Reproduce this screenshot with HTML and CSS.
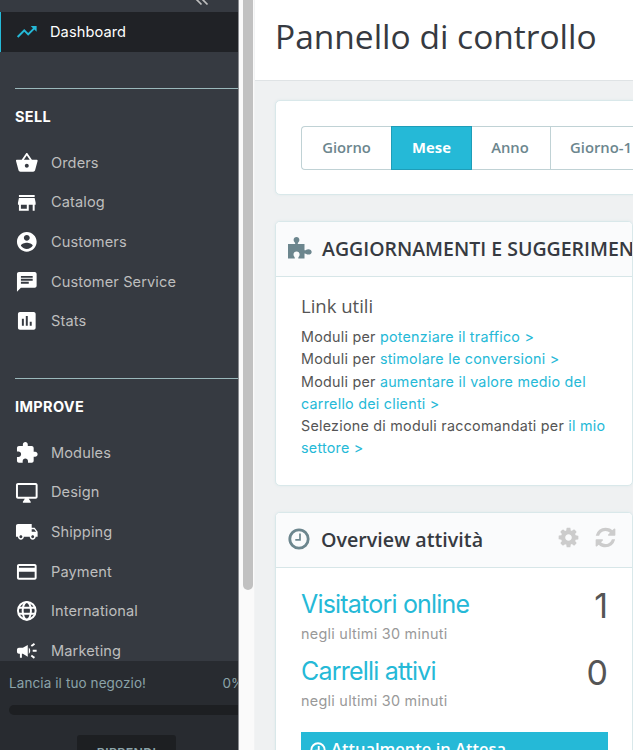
FILE: index.html
```html
<!DOCTYPE html>
<html lang="it">
<head>
<meta charset="utf-8">
<title>Pannello di controllo</title>
<link rel="stylesheet" href="styles.css">
</head>
<body>
<div class="app">
  <nav class="sidebar">
    <div class="collapse"><svg width="14" height="12" viewBox="0 0 14 12"><path d="M6.5 0.5L1.5 5.5l5 5M12.5 0.5l-5 5 5 5"/></svg></div>
    <a class="item active"><svg viewBox="0 0 24 24"><path d="M16 6l2.29 2.29-4.88 4.88-4-4L2 16.59 3.41 18l6-6 4 4 6.3-6.29L22 12V6z"/></svg><span>Dashboard</span></a>
    <section class="group first">
      <h2>SELL</h2>
      <a class="item"><svg viewBox="0 0 24 24"><path d="M17.21 9l-4.38-6.56c-.19-.28-.51-.42-.83-.42-.32 0-.64.14-.83.43L6.79 9H2c-.55 0-1 .45-1 1 0 .09.01.18.04.27l2.54 9.27c.23.84 1 1.46 1.92 1.46h13c.92 0 1.69-.62 1.93-1.46l2.54-9.27L23 10c0-.55-.45-1-1-1h-4.79zM9 9l3-4.4L15 9H9zm3 8c-1.1 0-2-.9-2-2s.9-2 2-2 2 .9 2 2-.9 2-2 2z"/></svg><span>Orders</span></a>
      <a class="item"><svg viewBox="0 0 24 24"><path d="M20 4H4v2h16V4zm1 10v-2l-1-5H4l-1 5v2h1v6h10v-6h4v6h2v-6h1zm-9 4H6v-4h6v4z"/></svg><span>Catalog</span></a>
      <a class="item"><svg viewBox="0 0 24 24"><path d="M12 2C6.48 2 2 6.48 2 12s4.48 10 10 10 10-4.48 10-10S17.52 2 12 2zm0 3c1.66 0 3 1.34 3 3s-1.340 3-3 3-3-1.340-3-3 1.340-3 3-3zm0 14.200c-2.500 0-4.710-1.280-6-3.220.030-1.990 4-3.080 6-3.080 1.990 0 5.970 1.090 6 3.080-1.290 1.940-3.500 3.220-6 3.220z"/></svg><span>Customers</span></a>
      <a class="item"><svg viewBox="0 0 24 24"><path d="M20 2H4c-1.100 0-1.990.9-1.990 2L2 22l4-4h14c1.100 0 2-.9 2-2V4c0-1.100-.9-2-2-2zM6 9h12v2H6V9zm8 5H6v-2h8v2zm4-6H6V6h12v2z"/></svg><span>Customer Service</span></a>
      <a class="item"><svg viewBox="0 0 24 24"><path d="M19 3H5c-1.100 0-2 .9-2 2v14c0 1.100.9 2 2 2h14c1.100 0 2-.9 2-2V5c0-1.100-.9-2-2-2zM9 17H7v-7h2v7zm4 0h-2V7h2v10zm4 0h-2v-4h2v4z"/></svg><span>Stats</span></a>
    </section>
    <section class="group">
      <h2>IMPROVE</h2>
      <a class="item"><svg viewBox="0 0 24 24"><path d="M20.500 11H19V7c0-1.100-.9-2-2-2h-4V3.500C13 2.120 11.880 1 10.500 1S8 2.120 8 3.500V5H4c-1.100 0-1.990.9-1.990 2v3.800H3.500c1.490 0 2.700 1.210 2.700 2.700s-1.210 2.700-2.700 2.700H2V20c0 1.100.9 2 2 2h3.800v-1.500c0-1.490 1.210-2.700 2.700-2.700 1.490 0 2.700 1.210 2.700 2.700V22H17c1.100 0 2-.9 2-2v-4h1.500c1.380 0 2.500-1.120 2.500-2.500S21.880 11 20.500 11z"/></svg><span>Modules</span></a>
      <a class="item"><svg viewBox="0 0 24 24"><path d="M21 2H3c-1.100 0-2 .9-2 2v12c0 1.100.9 2 2 2h7l-2 3v1h8v-1l-2-3h7c1.100 0 2-.9 2-2V4c0-1.100-.9-2-2-2zm0 14H3V4h18v12z"/></svg><span>Design</span></a>
      <a class="item"><svg viewBox="0 0 24 24"><path d="M20 8h-3V4H3c-1.100 0-2 .9-2 2v11h2c0 1.660 1.340 3 3 3s3-1.340 3-3h6c0 1.660 1.340 3 3 3s3-1.340 3-3h2v-5l-3-4zM6 18.500c-.83 0-1.500-.67-1.500-1.500s.67-1.500 1.500-1.500 1.500.67 1.500 1.500-.67 1.500-1.500 1.500zm13.500-9l1.960 2.500H17V9.500h2.500zm-1.500 9c-.83 0-1.500-.67-1.500-1.500s.67-1.500 1.500-1.500 1.500.67 1.500 1.500-.67 1.500-1.500 1.500z"/></svg><span>Shipping</span></a>
      <a class="item"><svg viewBox="0 0 24 24"><path d="M20 4H4c-1.110 0-1.990.89-1.990 2L2 18c0 1.110.89 2 2 2h16c1.110 0 2-.89 2-2V6c0-1.110-.89-2-2-2zm0 14H4v-6h16v6zm0-10H4V6h16v2z"/></svg><span>Payment</span></a>
      <a class="item"><svg viewBox="0 0 24 24"><g fill="none" stroke="currentColor" stroke-width="2"><circle cx="12" cy="12" r="9"/><ellipse cx="12" cy="12" rx="4.200" ry="9"/><path d="M3.500 9h17M3.500 15h17"/></g></svg><span>International</span></a>
      <a class="item"><svg viewBox="0 0 24 24"><path d="M18 11v2h4v-2h-4zm-2 6.610c.96.71 2.210 1.650 3.200 2.390.4-.53.8-1.070 1.200-1.600-.99-.74-2.240-1.680-3.200-2.400-.4.54-.8 1.080-1.200 1.610zM20.400 5.600c-.4-.53-.8-1.070-1.200-1.600-.99.740-2.240 1.680-3.200 2.400.4.530.8 1.070 1.200 1.600.96-.72 2.210-1.650 3.200-2.400zM4 9c-1.100 0-2 .9-2 2v2c0 1.100.9 2 2 2h1v4h2v-4h1l5 3V6L8 9H4zm11.500 3c0-1.330-.58-2.530-1.500-3.350v6.690c.92-.81 1.500-2.010 1.500-3.340z"/></svg><span>Marketing</span></a>
    </section>
    <div class="launch">
      <div class="launch-text"><span>Lancia il tuo negozio!</span><span class="percent">0%</span></div>
      <div class="progress"></div>
      <button class="resume">RIPRENDI</button>
    </div>
  </nav>
  <div class="scrollbar"><div class="thumb"></div></div>
  <main class="main">
    <header class="page-head"><h1>Pannello di controllo</h1></header>
    <div class="content">
      <section class="panel dates">
        <div class="buttons"><button>Giorno</button><button class="on">Mese</button><button>Anno</button><button class="last">Giorno-1</button></div>
      </section>
      <section class="panel tips">
        <div class="panel-head"><svg class="puzzle" width="24" height="22" viewBox="0 0 24 22"><path d="M0 7H7.200C7.500 5.400 5.600 5 5.600 3 5.600 1.200 6.900 0 8.500 0s2.900 1.200 2.900 3c0 2-1.900 2.400-1.600 4H16.500v6.300c1.500.3 1.700-1.100 3.800-1.100 2 0 3.400 1.200 3.400 2.700s-1.400 2.700-3.400 2.700c-2.100 0-2.300-1.400-3.800-1.100V21.500H10.300c-.3-1.700 1.300-2 1.300-4 0-1.900-1.200-3.100-3-3.100s-3.100 1.200-3.100 3.100c0 2 1.600 2.300 1.300 4H0z"/></svg><h3 class="caps">AGGIORNAMENTI E SUGGERIMENTI</h3></div>
        <div class="tips-body">
          <h4>Link utili</h4>
          <p>Moduli per <a>potenziare il traffico &gt;</a></p>
          <p>Moduli per <a>stimolare le conversioni &gt;</a></p>
          <p>Moduli per <a>aumentare il valore medio del<br>carrello dei clienti &gt;</a></p>
          <p>Selezione di moduli raccomandati per <a>il mio<br>settore &gt;</a></p>
        </div>
      </section>
      <section class="panel activity">
        <div class="panel-head"><svg class="clock" width="22" height="22" viewBox="0 0 22 22"><circle cx="11" cy="11" r="9.200"/><path d="M12 5.500v6.300H7.300"/></svg><h3>Overview attività</h3>
          <div class="tools"><svg width="23" height="23" viewBox="0 0 1792 1792"><path d="M1152 896q0-106-75-181t-181-75-181 75-75 181 75 181 181 75 181-75 75-181zm512-109v222q0 12-8 23t-20 13l-185 28q-19 54-39 91 35 50 107 138 10 12 10 25t-9 23q-27 37-99 108t-94 71q-12 0-26-9l-138-108q-44 23-91 38-16 136-29 186-7 28-36 28h-222q-14 0-24.500-8.500t-11.500-21.500l-28-184q-49-16-90-37l-141 107q-10 9-25 9-14 0-25-11-126-114-165-168-7-10-7-23 0-12 8-23 15-21 51-66.500t54-70.500q-27-50-41-99l-183-27q-13-2-21-12.500t-8-23.500v-222q0-12 8-23t19-13l186-28q14-46 39-92-40-57-107-138-10-12-10-24 0-10 9-23 26-36 98.500-107.500t94.500-71.500q13 0 26 10l138 107q44-23 91-38 16-136 29-186 7-28 36-28h222q14 0 24.500 8.500t11.500 21.500l28 184q49 16 90 37l142-107q9-9 24-9 13 0 25 10 129 119 165 170 7 8 7 22 0 12-8 23-15 21-51 66.500t-54 70.500q26 50 41 98l183 28q13 2 21 12.500t8 23.500z"/></svg><svg width="23" height="23" viewBox="0 0 1792 1792"><path d="M1639 1056q0 5-1 7-64 268-268 434.500t-478 166.500q-146 0-282.500-55t-243.500-157l-129 129q-19 19-45 19t-45-19-19-45v-448q0-26 19-45t45-19h448q26 0 45 19t19 45-19 45l-137 137q71 66 161 102t187 36q134 0 250-65t186-179q11-17 53-117 8-23 30-23h192q13 0 22.500 9.500t9.500 22.500zm25-800v448q0 26-19 45t-45 19h-448q-26 0-45-19t-19-45 19-45l138-138q-148-137-349-137-134 0-250 65t-186 179q-11 17-53 117-8 23-30 23h-199q-13 0-22.500-9.500t-9.500-22.500v-7q65-268 270-434.500t480-166.500q146 0 284 55.500t245 156.500l130-129q19-19 45-19t45 19 19 45z"/></svg></div>
        </div>
        <div class="activity-body">
          <div class="stat"><div><a>Visitatori online</a><small>negli ultimi 30 minuti</small></div><b>1</b></div>
          <div class="stat"><div><a>Carrelli attivi</a><small>negli ultimi 30 minuti</small></div><b>0</b></div>
          <div class="pending"><svg width="16" height="16" viewBox="0 0 22 22"><circle cx="11" cy="11" r="9.200"/><path d="M12 5.500v6.300H7.300"/></svg><span>Attualmente in Attesa</span></div>
        </div>
      </section>
    </div>
  </main>
</div>
</body>
</html>
```
FILE: styles.css
```css
* { box-sizing: border-box; }
body { margin: 0; font-family: Inter, "Liberation Sans", sans-serif; background: #eff1f2; overflow: hidden; }
h1, h2, h3, h4, p { margin: 0; }
button { font: inherit; margin: 0; padding: 0; }
.app { display: flex; width: 633px; height: 750px; overflow: hidden; }

.sidebar { position: relative; width: 238px; flex: none; height: 750px; overflow: hidden; background: #363a41; }
.collapse { height: 12px; padding-left: 195px; overflow: hidden; display: flex; align-items: flex-end; }
.collapse svg { flex: none; margin-bottom: 6px; fill: none; stroke: #bebebe; stroke-width: 1.7; }
.item { display: flex; align-items: center; height: 39.6px; padding-left: 15px; color: #bebebe; font-size: 14.6px; letter-spacing: 0.1px; white-space: nowrap; }
.item svg { width: 23.6px; height: 23.6px; margin-right: 12.4px; fill: currentColor; color: #fff; flex: none; }
.item.active { height: 40px; background: #202226; color: #fff; border-left: 1px solid #25b9d7; padding-left: 14px; }
.item.active svg { color: #25b9d7; margin-right: 11.4px; }
.group { margin-left: 15px; padding-top: 18px; border-top: 1px solid #9bb8bb; margin-top: 36.4px; height: 253.6px; }
.group.first { margin-top: 36px; }
.group .item { padding-left: 0; }
.group h2 { height: 36px; font-size: 14.5px; letter-spacing: 0.35px; line-height: 20px; font-weight: 700; color: #fff; }
.launch { position: absolute; left: 0; right: 0; bottom: 0; height: 89px; background: #282b30; padding-left: 9px; }
.launch-text { display: flex; justify-content: space-between; height: 44px; line-height: 44px; font-size: 13.5px; letter-spacing: 0.1px; color: #8ba3a9; }
.percent { width: 15.5px; white-space: nowrap; }
.progress { height: 10px; border-radius: 5px 0 0 5px; background: #1d1f22; }
.resume { display: block; width: 99px; height: 34px; margin: 20px 0 0 68px; border: 0; border-radius: 3px; background: #1d1f22; color: #8ba3a9; font-size: 12.4px; letter-spacing: 0.3px; font-weight: 600; }

.scrollbar { width: 17px; flex: none; background: #fafafa; border-left: 1px solid #8a8c90; border-right: 1px solid #f2f3f4; padding-left: 4px; }
.thumb { width: 10px; height: 590px; border-radius: 0 0 5px 5px; background: #c1c1c1; }

.main { width: 378px; flex: none; }
.page-head { height: 81px; background: #fff; border-bottom: 1px solid #dfe3e5; padding-left: 20px; }
h1 { font: 400 33.5px/73px "Open Sans", sans-serif; color: #363a41; white-space: nowrap; }
.content { padding: 19px 0 0 20px; }
.panel { background: #fff; border: 1px solid #d9e8ea; border-radius: 5px; box-shadow: 0 0 3px #dfe9eb; overflow: hidden; }
.dates { width: 380px; height: 95px; padding: 25px; }
.buttons { display: flex; height: 44px; }
.buttons button { width: 90px; flex: none; border: 1px solid #c0d2d5; border-right: 0; background: #fff; padding-bottom: 2px; font: 600 14.8px "Open Sans", sans-serif; color: #6c868e; }
.buttons button:first-child { border-radius: 4px 0 0 4px; }
.buttons .on { width: 81px; background: #25b9d7; border: 1px solid #1e9db8; color: #fff; font-weight: 700; }
.buttons .on + button { width: 78px; border-left: 0; padding-right: 2px; }
.buttons .last { width: 101px; }
.tips { height: 265px; margin-top: 26px; }
.activity { height: 260px; margin-top: 26px; }
.panel-head { height: 55px; display: flex; align-items: center; padding-left: 12px; background: #fafbfc; border-bottom: 1px solid #d7e6e8; }
.panel-head > svg { flex: none; }
.puzzle { fill: #6c868e; margin: 0 10px 2px 0; }
.clock { margin: 0 11px 2px 0; fill: none; stroke: #6c868e; stroke-width: 2.8; }
.clock path { stroke-width: 1.7; }
h3 { font: 600 19.7px/28px "Open Sans", sans-serif; color: #363a41; white-space: nowrap; margin-bottom: 1px; }
.caps { font-size: 19.5px; }
.tips-body { padding: 16px 0 0 25px; color: #555; font-size: 14.3px; letter-spacing: 0.25px; line-height: 22.3px; white-space: nowrap; }
h4 { font: 400 18.5px/26px "Open Sans", sans-serif; letter-spacing: 0; margin-bottom: 7px; }
a { color: #25b9d7; }
.tools { margin-left: auto; display: flex; gap: 14px; padding-right: 15px; margin-top: -6px; }
.tools svg { fill: #ccc; }
.activity-body { padding: 20px 24px 0 25px; }
.stat { display: flex; justify-content: space-between; height: 67px; }
.stat a { display: block; font-size: 25px; line-height: 33px; letter-spacing: -0.8px; white-space: nowrap; }
.stat small { display: block; font-size: 14.4px; letter-spacing: 0.27px; line-height: 26px; color: #999; }
.stat b { font-weight: 400; font-size: 34px; line-height: 36px; color: #555; }
.pending { margin-top: 10px; height: 50px; padding: 4px 0 0 9px; background: #25b9d7; color: #fff; display: flex; align-items: flex-start; gap: 5px; font: 600 16.5px/25px "Open Sans", sans-serif; }
.pending svg { margin-top: 6px; fill: none; stroke: #fff; stroke-width: 2.6; }
```
